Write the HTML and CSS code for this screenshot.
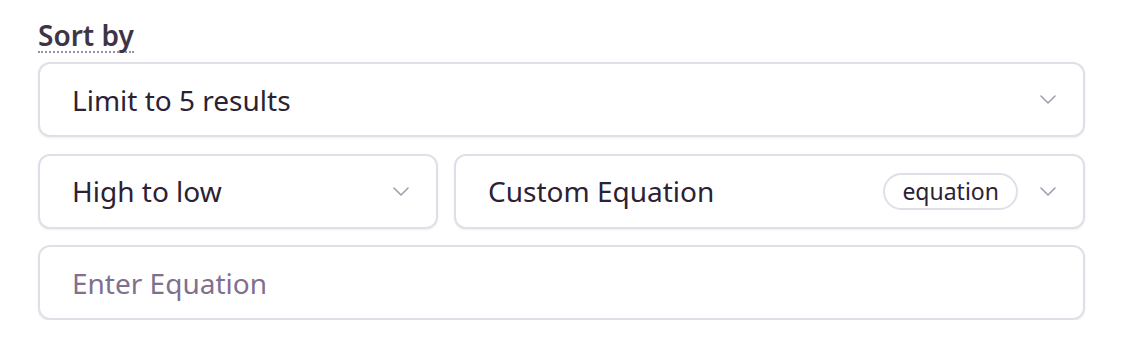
FILE: index.html
```html
<!DOCTYPE html>
<html>
<head>
<meta charset="utf-8">
<link rel="stylesheet" href="styles.css">
</head>
<body>
<div class="panel">
  <div class="label"><span class="label-text">Sort by</span></div>
  <div class="fields">
    <div class="select">
      <span class="value">Limit to 5 results</span>
      <svg class="chev" width="16" height="9" viewBox="0 0 16 9"><path d="M1 1 L8 8 L15 1" fill="none" stroke="#a59cb1" stroke-width="1.6" stroke-linecap="round" stroke-linejoin="round"/></svg>
    </div>
    <div class="row">
      <div class="select left">
        <span class="value">High to low</span>
        <svg class="chev" width="16" height="9" viewBox="0 0 16 9"><path d="M1 1 L8 8 L15 1" fill="none" stroke="#a59cb1" stroke-width="1.6" stroke-linecap="round" stroke-linejoin="round"/></svg>
      </div>
      <div class="select right">
        <span class="value">Custom Equation</span>
        <span class="pill">equation</span>
        <svg class="chev" width="16" height="9" viewBox="0 0 16 9"><path d="M1 1 L8 8 L15 1" fill="none" stroke="#a59cb1" stroke-width="1.6" stroke-linecap="round" stroke-linejoin="round"/></svg>
      </div>
    </div>
    <div class="select input">
      <span class="placeholder">Enter Equation</span>
    </div>
  </div>
</div>
</body>
</html>
```

FILE: styles.css
```css
html, body {
  margin: 0;
  padding: 0;
  background: #ffffff;
}
body {
  font-family: "Noto Sans", "Open Sans", sans-serif;
  color: #2b2233;
}
.panel {
  padding: 20px 47px 0 38px;
}
.label {
  height: 42px;
}
.label-text {
  font-size: 28px;
  font-weight: 600;
  color: #3e3446;
  line-height: 31px;
  border-bottom: 2px dotted #9a8fa6;
  display: inline-block;
}
.fields {
  display: flex;
  flex-direction: column;
  gap: 16.5px;
}
.row {
  display: flex;
  gap: 16px;
}
.select {
  box-sizing: border-box;
  height: 75px;
  border: 2px solid #e2dee7;
  border-radius: 12px;
  box-shadow: 0 1px 2px rgba(43, 34, 51, 0.08);
  display: flex;
  align-items: center;
  padding: 0 27px 0 32px;
  background: #fff;
}
.left {
  width: 400px;
}
.right {
  flex: 1;
}
.value {
  flex: 1;
  font-size: 28px;
  color: #2b2233;
}
.placeholder {
  font-size: 28px;
  color: #80708f;
}
.chev {
  display: block;
  flex: none;
}
.pill {
  box-sizing: border-box;
  height: 37px;
  padding: 0 17px;
  border: 2px solid #e2dee7;
  border-radius: 19px;
  font-size: 23px;
  line-height: 32px;
  color: #2b2233;
  margin-right: 22px;
}
```
